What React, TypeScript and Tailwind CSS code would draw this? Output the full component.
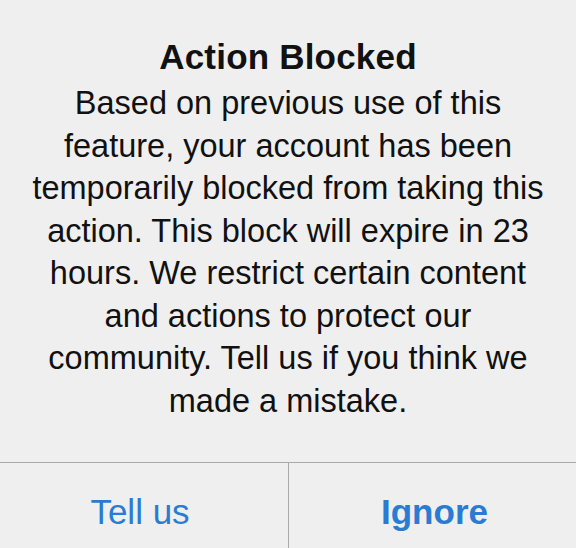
import React from 'react';

// iOS 风格的提示弹窗
const lines = [
  'Based on previous use of this',
  'feature, your account has been',
  'temporarily blocked from taking this',
  'action. This block will expire in 23',
  'hours. We restrict certain content',
  'and actions to protect our',
  'community. Tell us if you think we',
  'made a mistake.',
];

export default function App() {
  return (
    <main
      className="w-[576px] h-[548px] bg-[#efefef] text-[#111] flex flex-col overflow-hidden"
      style={{ fontFamily: '"Liberation Sans", Arial, sans-serif' }}
    >
      <section className="flex-1 flex flex-col items-center pt-[36px] text-center">
        <h1 className="text-[35px] leading-[42px] font-bold tracking-[0.2px]">Action Blocked</h1>
        <p className="mt-[4px] text-[32.5px] leading-[42.5px]">
          {lines.map((l, i) => (
            <span key={i} className="block whitespace-nowrap">
              {l}
            </span>
          ))}
        </p>
      </section>

      <div className="h-[86px] border-t border-[#a9a9a9] grid grid-cols-2">
        <button className="flex items-center justify-center text-[35px] text-[#2a7cd3] pt-[14px] pr-[8px]">
          Tell us
        </button>
        <button className="flex items-center justify-center border-l border-[#a9a9a9] text-[35px] font-bold text-[#2a7cd3] pt-[14px] pl-[4px]">
          Ignore
        </button>
      </div>
    </main>
  );
}
